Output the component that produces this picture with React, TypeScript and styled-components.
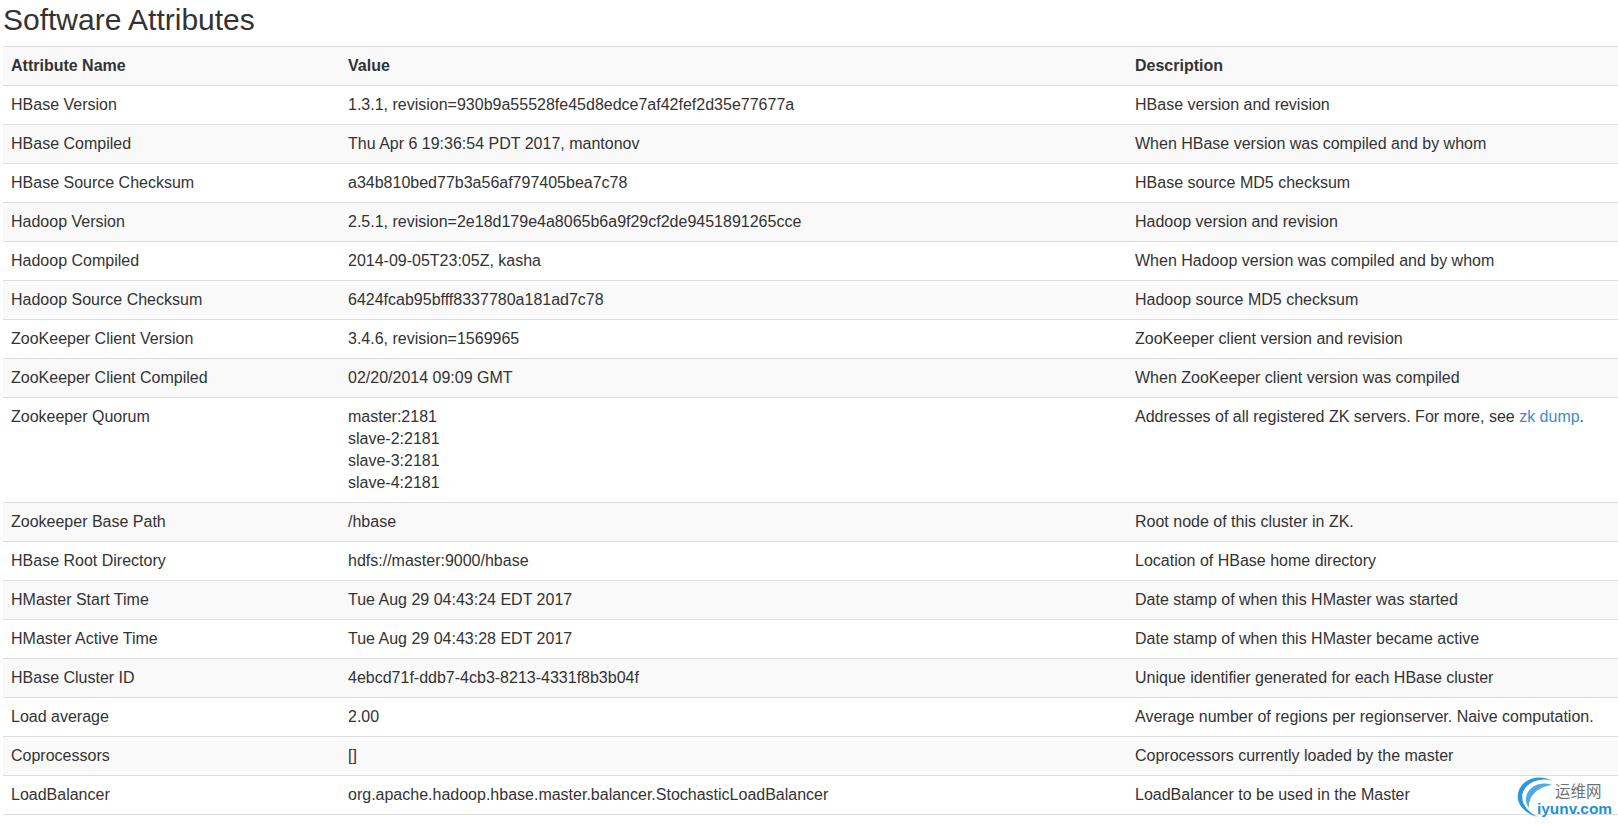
import React from "react";
import styled, { createGlobalStyle } from "styled-components";

const Global = createGlobalStyle`
  html, body { margin: 0; padding: 0; background: #fff; }
  body { width: 1618px; height: 824px; overflow: hidden; font-family: "Liberation Sans", Arial, sans-serif; color: #333; }
`;
const Page = styled.div`
  position: relative;
  width: 1618px;
  height: 824px;
  overflow: hidden;
  padding-left: 3px;
  box-sizing: border-box;
`;
const Title = styled.h2`
  margin: 0;
  height: 46px;
  font-size: 30px;
  line-height: 40px;
  font-weight: 500;
  color: #333;
`;
const Table = styled.table`
  width: 1615px;
  table-layout: fixed;
  border-collapse: collapse;
  font-size: 16px;
  line-height: 22px;
`;
const Row = styled.tr<{ $striped: boolean }>`
  background: ${(p) => (p.$striped ? "#f9f9f9" : "#fff")};
`;
const Head = styled.th`
  padding: 8px;
  text-align: left;
  font-weight: 700;
  border-top: 1px solid #ddd;
  border-bottom: 1px solid #ddd;
`;
const Cell = styled.td`
  padding: 8px;
  vertical-align: top;
  border-bottom: 1px solid #ddd;
  white-space: nowrap;
`;
const Link = styled.a`
  color: #428bca;
  text-decoration: none;
`;
const Mark = styled.div`
  position: absolute;
  left: 1515px;
  top: 776px;
  width: 100px;
  height: 46px;
`;
const Swoosh = styled.svg`
  position: absolute;
  left: 0;
  top: 0;
`;
const MarkCn = styled.span`
  position: absolute;
  left: 40px;
  top: 4px;
  font-family: "Noto Sans CJK SC", sans-serif;
  font-size: 15.5px;
  line-height: 20px;
  color: #6b7378;
`;
const MarkEn = styled.span`
  position: absolute;
  left: 22px;
  top: 24px;
  font-family: "Liberation Sans", sans-serif;
  font-size: 15.4px;
  line-height: 18px;
  font-weight: 700;
  color: #1e8fd8;
`;

const rows: [string, React.ReactNode, React.ReactNode][] = [
  ["HBase Version", "1.3.1, revision=930b9a55528fe45d8edce7af42fef2d35e77677a", "HBase version and revision"],
  ["HBase Compiled", "Thu Apr 6 19:36:54 PDT 2017, mantonov", "When HBase version was compiled and by whom"],
  ["HBase Source Checksum", "a34b810bed77b3a56af797405bea7c78", "HBase source MD5 checksum"],
  ["Hadoop Version", "2.5.1, revision=2e18d179e4a8065b6a9f29cf2de9451891265cce", "Hadoop version and revision"],
  ["Hadoop Compiled", "2014-09-05T23:05Z, kasha", "When Hadoop version was compiled and by whom"],
  ["Hadoop Source Checksum", "6424fcab95bfff8337780a181ad7c78", "Hadoop source MD5 checksum"],
  ["ZooKeeper Client Version", "3.4.6, revision=1569965", "ZooKeeper client version and revision"],
  ["ZooKeeper Client Compiled", "02/20/2014 09:09 GMT", "When ZooKeeper client version was compiled"],
  [
    "Zookeeper Quorum",
    <>master:2181<br />slave-2:2181<br />slave-3:2181<br />slave-4:2181</>,
    <>Addresses of all registered ZK servers. For more, see <Link href="#">zk dump</Link>.</>,
  ],
  ["Zookeeper Base Path", "/hbase", "Root node of this cluster in ZK."],
  ["HBase Root Directory", "hdfs://master:9000/hbase", "Location of HBase home directory"],
  ["HMaster Start Time", "Tue Aug 29 04:43:24 EDT 2017", "Date stamp of when this HMaster was started"],
  ["HMaster Active Time", "Tue Aug 29 04:43:28 EDT 2017", "Date stamp of when this HMaster became active"],
  ["HBase Cluster ID", "4ebcd71f-ddb7-4cb3-8213-4331f8b3b04f", "Unique identifier generated for each HBase cluster"],
  ["Load average", "2.00", "Average number of regions per regionserver. Naive computation."],
  ["Coprocessors", "[]", "Coprocessors currently loaded by the master"],
  ["LoadBalancer", "org.apache.hadoop.hbase.master.balancer.StochasticLoadBalancer", "LoadBalancer to be used in the Master"],
];

export default function App() {
  return (
    <Page>
      <Global />
      <Title>Software Attributes</Title>
      <Table>
        <colgroup>
          <col width="337" />
          <col width="787" />
          <col />
        </colgroup>
        <thead>
          <Row $striped={true}>
            <Head>Attribute Name</Head>
            <Head>Value</Head>
            <Head>Description</Head>
          </Row>
        </thead>
        <tbody>
          {rows.map(([name, value, desc], i) => (
            <Row key={name} $striped={i % 2 === 1}>
              <Cell>{name}</Cell>
              <Cell>{value}</Cell>
              <Cell>{desc}</Cell>
            </Row>
          ))}
        </tbody>
      </Table>
      <Mark>
        <Swoosh width="42" height="46" viewBox="0 0 42 46" fill="none">
          <path d="M38 5C28 -1 12 0 5 12C-1 23 5 36 23 41C11 35 5 26 8 16C12 6 26 1 38 5Z" fill="#2a97dc" />
          <path d="M37 9C27 5 16 9 12 18C10 23 11 28 14 32C13 23 20 11 37 9Z" fill="#4fa9e2" />
        </Swoosh>
        <MarkCn>运维网</MarkCn>
        <MarkEn>iyunv.com</MarkEn>
      </Mark>
    </Page>
  );
}
